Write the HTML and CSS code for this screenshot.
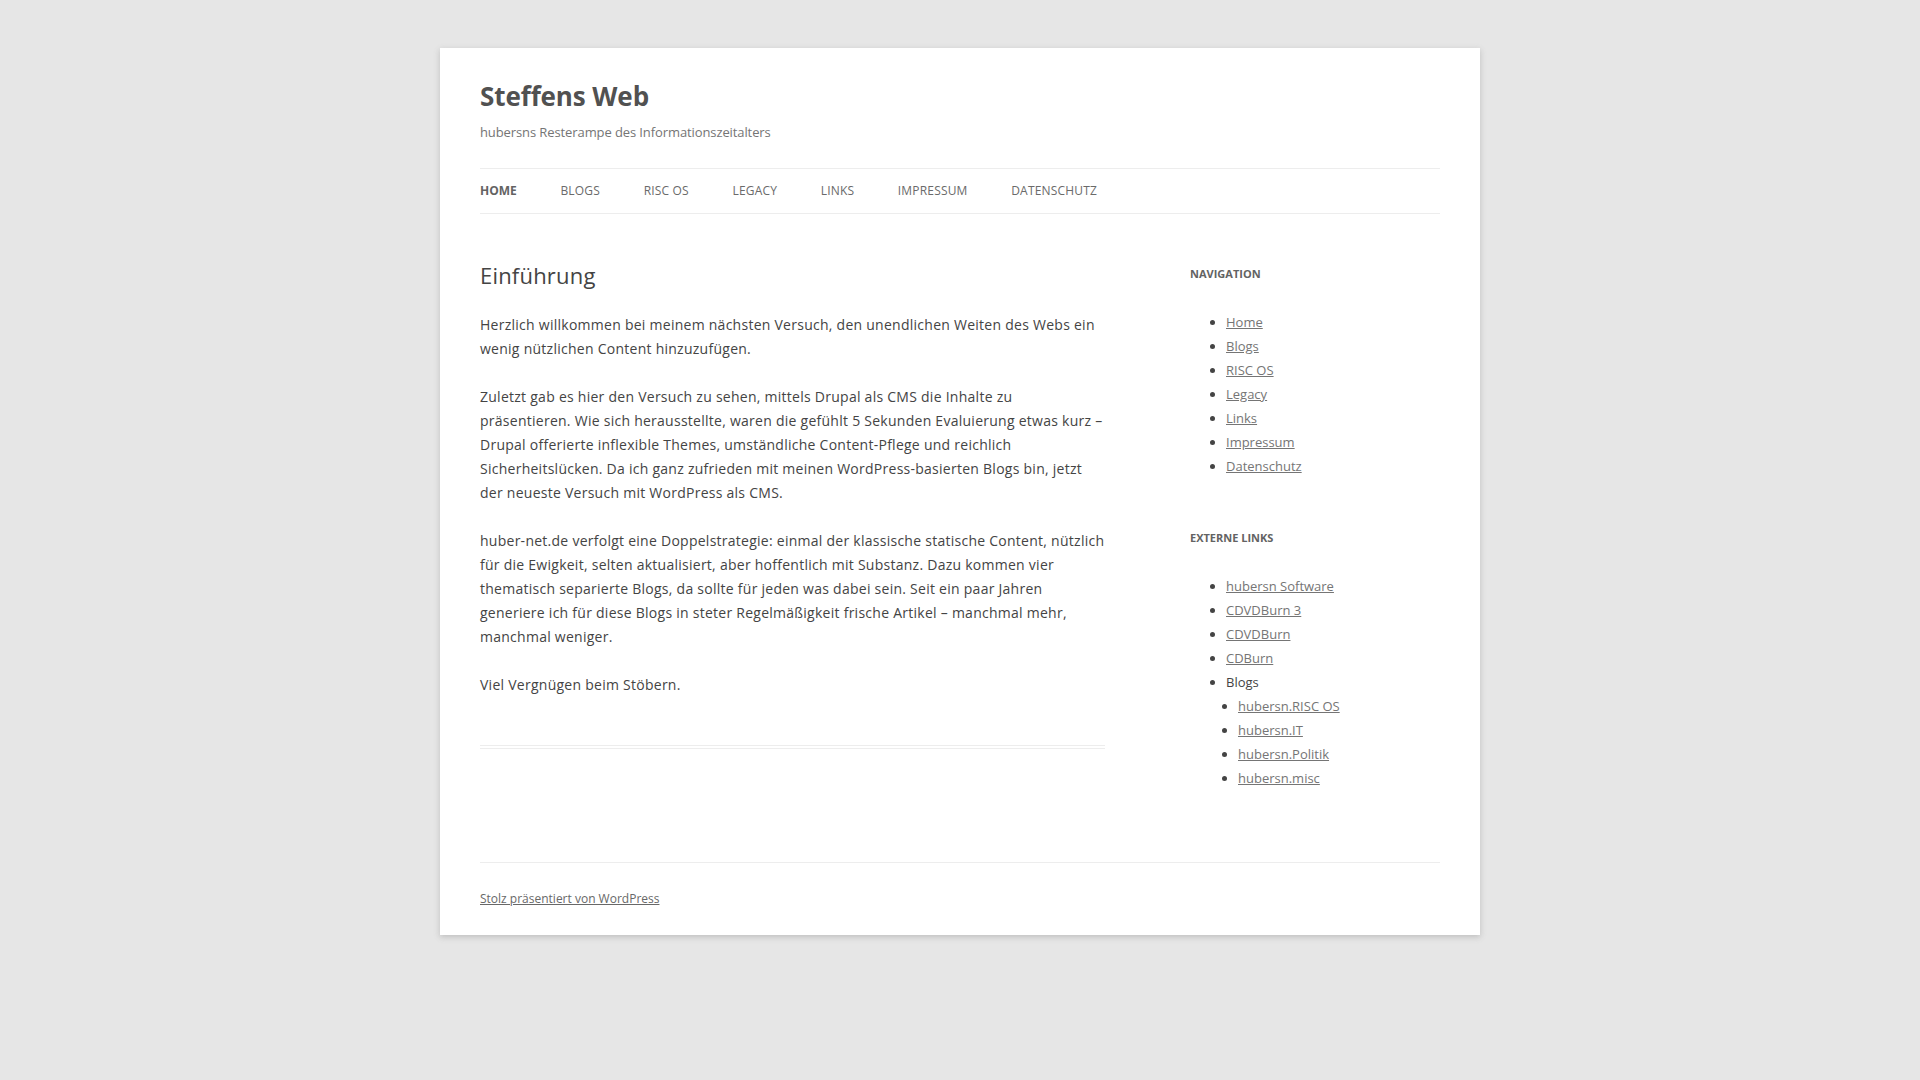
FILE: index.html
```html
<!DOCTYPE html>
<html lang="de">
<head>
<meta charset="utf-8">
<title>Steffens Web</title>
<link rel="stylesheet" href="styles.css">
</head>
<body>
<div class="site">
  <header class="site-header">
    <h1 class="site-title"><a href="#">Steffens Web</a></h1>
    <h2 class="site-description">hubersns Resterampe des Informationszeitalters</h2>
    <nav class="main-navigation">
      <ul class="nav-menu">
        <li class="current"><a href="#">Home</a></li>
        <li><a href="#">Blogs</a></li>
        <li><a href="#">RISC OS</a></li>
        <li><a href="#">Legacy</a></li>
        <li><a href="#">Links</a></li>
        <li><a href="#">Impressum</a></li>
        <li><a href="#">Datenschutz</a></li>
      </ul>
    </nav>
  </header>

  <div class="main">
    <div class="site-content">
      <article class="page">
        <header class="entry-header">
          <h1 class="entry-title">Einführung</h1>
        </header>
        <div class="entry-content">
          <p>Herzlich willkommen bei meinem nächsten Versuch, den unendlichen Weiten des Webs ein wenig nützlichen Content hinzuzufügen.</p>
          <p>Zuletzt gab es hier den Versuch zu sehen, mittels Drupal als CMS die Inhalte zu präsentieren. Wie sich herausstellte, waren die gefühlt 5 Sekunden Evaluierung etwas kurz – Drupal offerierte inflexible Themes, umständliche Content-Pflege und reichlich Sicherheitslücken. Da ich ganz zufrieden mit meinen WordPress-basierten Blogs bin, jetzt der neueste Versuch mit WordPress als CMS.</p>
          <p>huber-net.de verfolgt eine Doppelstrategie: einmal der klassische statische Content, nützlich für die Ewigkeit, selten aktualisiert, aber hoffentlich mit Substanz. Dazu kommen vier thematisch separierte Blogs, da sollte für jeden was dabei sein. Seit ein paar Jahren generiere ich für diese Blogs in steter Regelmäßigkeit frische Artikel – manchmal mehr, manchmal weniger.</p>
          <p>Viel Vergnügen beim Stöbern.</p>
        </div>
      </article>
    </div>

    <aside class="widget-area">
      <section class="widget">
        <h3 class="widget-title">Navigation</h3>
        <ul class="widget-list">
          <li><a href="#">Home</a></li>
          <li><a href="#">Blogs</a></li>
          <li><a href="#">RISC OS</a></li>
          <li><a href="#">Legacy</a></li>
          <li><a href="#">Links</a></li>
          <li><a href="#">Impressum</a></li>
          <li><a href="#">Datenschutz</a></li>
        </ul>
      </section>
      <section class="widget">
        <h3 class="widget-title">Externe Links</h3>
        <ul class="widget-list">
          <li><a href="#">hubersn Software</a></li>
          <li><a href="#">CDVDBurn 3</a></li>
          <li><a href="#">CDVDBurn</a></li>
          <li><a href="#">CDBurn</a></li>
          <li>Blogs
            <ul class="sub-list">
              <li><a href="#">hubersn.RISC OS</a></li>
              <li><a href="#">hubersn.IT</a></li>
              <li><a href="#">hubersn.Politik</a></li>
              <li><a href="#">hubersn.misc</a></li>
            </ul>
          </li>
        </ul>
      </section>
    </aside>
  </div>

  <footer class="site-footer">
    <div class="site-info"><a href="#">Stolz präsentiert von WordPress</a></div>
  </footer>
</div>
</body>
</html>
```

FILE: styles.css
```css
html {
  font-size: 14px;
}
body {
  margin: 0;
  background: #e6e6e6;
  color: #444;
  font-family: "Open Sans", Helvetica, Arial, sans-serif;
  font-size: 14px;
  line-height: 24px;
  text-rendering: optimizeLegibility;
}
a {
  color: #757575;
}
.site {
  max-width: 960px;
  margin: 48px auto;
  padding: 0 40px;
  background: #fff;
  box-shadow: rgba(100, 100, 100, 0.3) 0 2px 6px;
}
.site-header {
  padding: 24px 0;
}
.site-title {
  margin: 0;
  font-size: 26px;
  line-height: 48px;
  font-weight: bold;
  letter-spacing: -0.1px;
}
.site-title a {
  color: #515151;
  text-decoration: none;
}
.site-description {
  margin: 0;
  font-size: 13px;
  line-height: 24px;
  font-weight: normal;
  color: #757575;
  letter-spacing: -0.1px;
}
.main-navigation {
  margin-top: 24px;
}
.nav-menu {
  margin: 0;
  padding: 0;
  list-style: none;
  border-top: 1px solid #ededed;
  border-bottom: 1px solid #ededed;
}
.nav-menu li {
  display: inline-block;
  margin: 0 40px 0 0;
  font-size: 12px;
}
.nav-menu a {
  display: inline-block;
  line-height: 3.692307692;
  color: #6a6a6a;
  text-transform: uppercase;
  text-decoration: none;
  white-space: nowrap;
  letter-spacing: 0.18px;
}
.nav-menu .current a {
  color: #636363;
  font-weight: bold;
  letter-spacing: 0;
}
.main {
  display: flex;
  justify-content: space-between;
  align-items: flex-start;
  margin-top: 24px;
}
.site-content {
  width: 65.104166667%;
}
.page {
  margin-bottom: 72px;
  padding-bottom: 24px;
  border-bottom: 4px double #ededed;
}
.entry-header {
  margin-bottom: 24px;
}
.entry-title {
  margin: 0;
  font-size: 22px;
  line-height: 1.2;
  font-weight: normal;
  color: #444;
  letter-spacing: 0.2px;
}
.entry-content p {
  margin: 0 0 24px;
  line-height: 24px;
  letter-spacing: 0.26px;
}
.widget-area {
  width: 26.041666667%;
}
.widget {
  margin-bottom: 48px;
}
.widget-title {
  margin: 0 0 24px;
  font-size: 11px;
  line-height: 24px;
  font-weight: bold;
  text-transform: uppercase;
  color: #636363;
}
.widget-list {
  margin: 0 0 24px;
  padding: 0;
  list-style: disc outside;
}
.widget-list li {
  margin: 0 0 0 36px;
  font-size: 13px;
  line-height: 24px;
}
.sub-list {
  margin: 0;
  padding: 0;
  list-style: disc outside;
}
.widget-list .sub-list li {
  margin-left: 12px;
}
.site-footer {
  margin-top: 24px;
  border-top: 1px solid #ededed;
  padding: 24px 0;
  font-size: 12px;
  line-height: 24px;
}
.site-footer a {
  color: #686868;
}
```
